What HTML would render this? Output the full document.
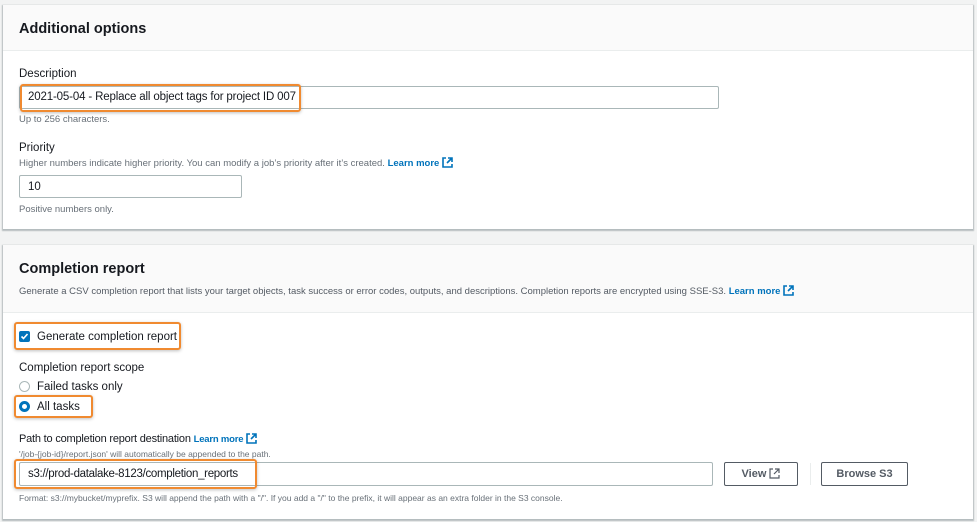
<!DOCTYPE html>
<html><head><meta charset="utf-8"><style>
*{margin:0;padding:0;box-sizing:border-box}
body{width:977px;height:522px;background:#f2f3f3;font-family:"Liberation Sans",sans-serif;color:#16191f;position:relative;overflow:hidden}
.a{position:absolute;white-space:nowrap}
.panel{position:absolute;left:3px;width:970px;background:#fff;box-shadow:0 1px 1px 1px rgba(0,28,36,.25)}
.hdr{position:absolute;left:0;top:0;width:100%;background:#fafafa;border-bottom:1px solid #eaeded}
.h{font-size:14.5px;font-weight:bold}
.lbl{font-size:11.5px}
.sm{font-size:9.5px;color:#687078}
.lnk{color:#0073bb;font-weight:bold}
.inp{position:absolute;border:1px solid #aab7b8;border-radius:2px;background:#fff}
.or{position:absolute;border:2px solid #f08a30;border-radius:3px;box-shadow:0 1px 3px rgba(0,0,0,.25)}
.btn{position:absolute;border:1px solid #545b64;border-radius:2px;font-size:11px;font-weight:bold;color:#545b64;text-align:center;line-height:22px;background:#fff}
svg.ext{vertical-align:-2px}
</style></head><body>
<div class="panel" style="top:5px;height:224px">
 <div class="hdr" style="height:46px"></div>
</div>
<div class="a h" style="left:19px;top:21px">Additional options</div>
<div class="a lbl" style="left:19px;top:68px">Description</div>
<div class="inp" style="left:19px;top:86px;width:700px;height:23px"></div>
<div class="a" style="left:28px;top:91px;font-size:11.5px;letter-spacing:-.15px">2021-05-04 - Replace all object tags for project ID 007</div>
<div class="or" style="left:20px;top:84px;width:281px;height:28px"></div>
<div class="a sm" style="left:19px;top:114px">Up to 256 characters.</div>
<div class="a lbl" style="left:19px;top:142px">Priority</div>
<div class="a sm" style="left:19px;top:157px">Higher numbers indicate higher priority. You can modify a job’s priority after it’s created. <span class="lnk">Learn more</span> <svg class="ext" width="11" height="11" viewBox="0 0 11 11"><path d="M4 1H1v9h9V7M6 1h4v4M10 1L5 6" fill="none" stroke="#0073bb" stroke-width="1.6"/></svg></div>
<div class="inp" style="left:19px;top:175px;width:223px;height:23px"></div>
<div class="a" style="left:28px;top:181px;font-size:11.5px">10</div>
<div class="a sm" style="left:19px;top:204px">Positive numbers only.</div>

<div class="panel" style="top:245px;height:274px">
 <div class="hdr" style="height:68px"></div>
</div>
<div class="a h" style="left:19px;top:261px">Completion report</div>
<div class="a sm" style="left:19px;top:285px;color:#545b64">Generate a CSV completion report that lists your target objects, task success or error codes, outputs, and descriptions. Completion reports are encrypted using SSE-S3. <span class="lnk">Learn more</span> <svg class="ext" width="11" height="11" viewBox="0 0 11 11"><path d="M4 1H1v9h9V7M6 1h4v4M10 1L5 6" fill="none" stroke="#0073bb" stroke-width="1.6"/></svg></div>
<div class="a" style="left:19px;top:331px;width:11px;height:11px;background:#0073bb;border-radius:2px"><svg width="11" height="11" viewBox="0 0 11 11" style="position:absolute;top:0;left:0"><path d="M2.5 5.5l2 2 4-4.5" fill="none" stroke="#fff" stroke-width="1.6"/></svg></div>
<div class="a" style="left:37px;top:331px;font-size:11.5px">Generate completion report</div>
<div class="or" style="left:14px;top:322px;width:167px;height:28px"></div>
<div class="a lbl" style="left:19px;top:362px">Completion report scope</div>
<div class="a" style="left:19px;top:381px;width:11px;height:11px;border:1px solid #aab7b8;border-radius:50%"></div>
<div class="a" style="left:37px;top:381px;font-size:11.5px">Failed tasks only</div>
<div class="a" style="left:19px;top:401px;width:11px;height:11px;border:3.5px solid #0073bb;border-radius:50%"></div>
<div class="a" style="left:37px;top:401px;font-size:11.5px">All tasks</div>
<div class="or" style="left:14px;top:395px;width:79px;height:23px"></div>
<div class="a" style="left:19px;top:433px;font-size:11px;letter-spacing:-.2px">Path to completion report destination <span class="lnk" style="font-size:9.5px">Learn more</span> <svg class="ext" width="11" height="11" viewBox="0 0 11 11"><path d="M4 1H1v9h9V7M6 1h4v4M10 1L5 6" fill="none" stroke="#0073bb" stroke-width="1.6"/></svg></div>
<div class="a sm" style="left:19px;top:449px;font-size:8.5px">'/job-{job-id}/report.json' will automatically be appended to the path.</div>
<div class="inp" style="left:19px;top:462px;width:694px;height:24px"></div>
<div class="a" style="left:28px;top:468px;font-size:11.5px;letter-spacing:-.3px">s3://prod-datalake-8123/completion_reports</div>
<div class="or" style="left:14px;top:459px;width:243px;height:30px"></div>
<div class="btn" style="left:724px;top:462px;width:74px;height:24px">View <svg class="ext" width="11" height="11" viewBox="0 0 11 11"><path d="M4 1H1v9h9V7M6 1h4v4M10 1L5 6" fill="none" stroke="#545b64" stroke-width="1.2"/></svg></div>
<div class="a" style="left:810px;top:463px;width:1px;height:22px;background:#eaeded"></div>
<div class="btn" style="left:821px;top:462px;width:87px;height:24px">Browse S3</div>
<div class="a sm" style="left:19px;top:493px;font-size:8.5px">Format: s3://mybucket/myprefix. S3 will append the path with a "/". If you add a "/" to the prefix, it will appear as an extra folder in the S3 console.</div>
</body></html>
